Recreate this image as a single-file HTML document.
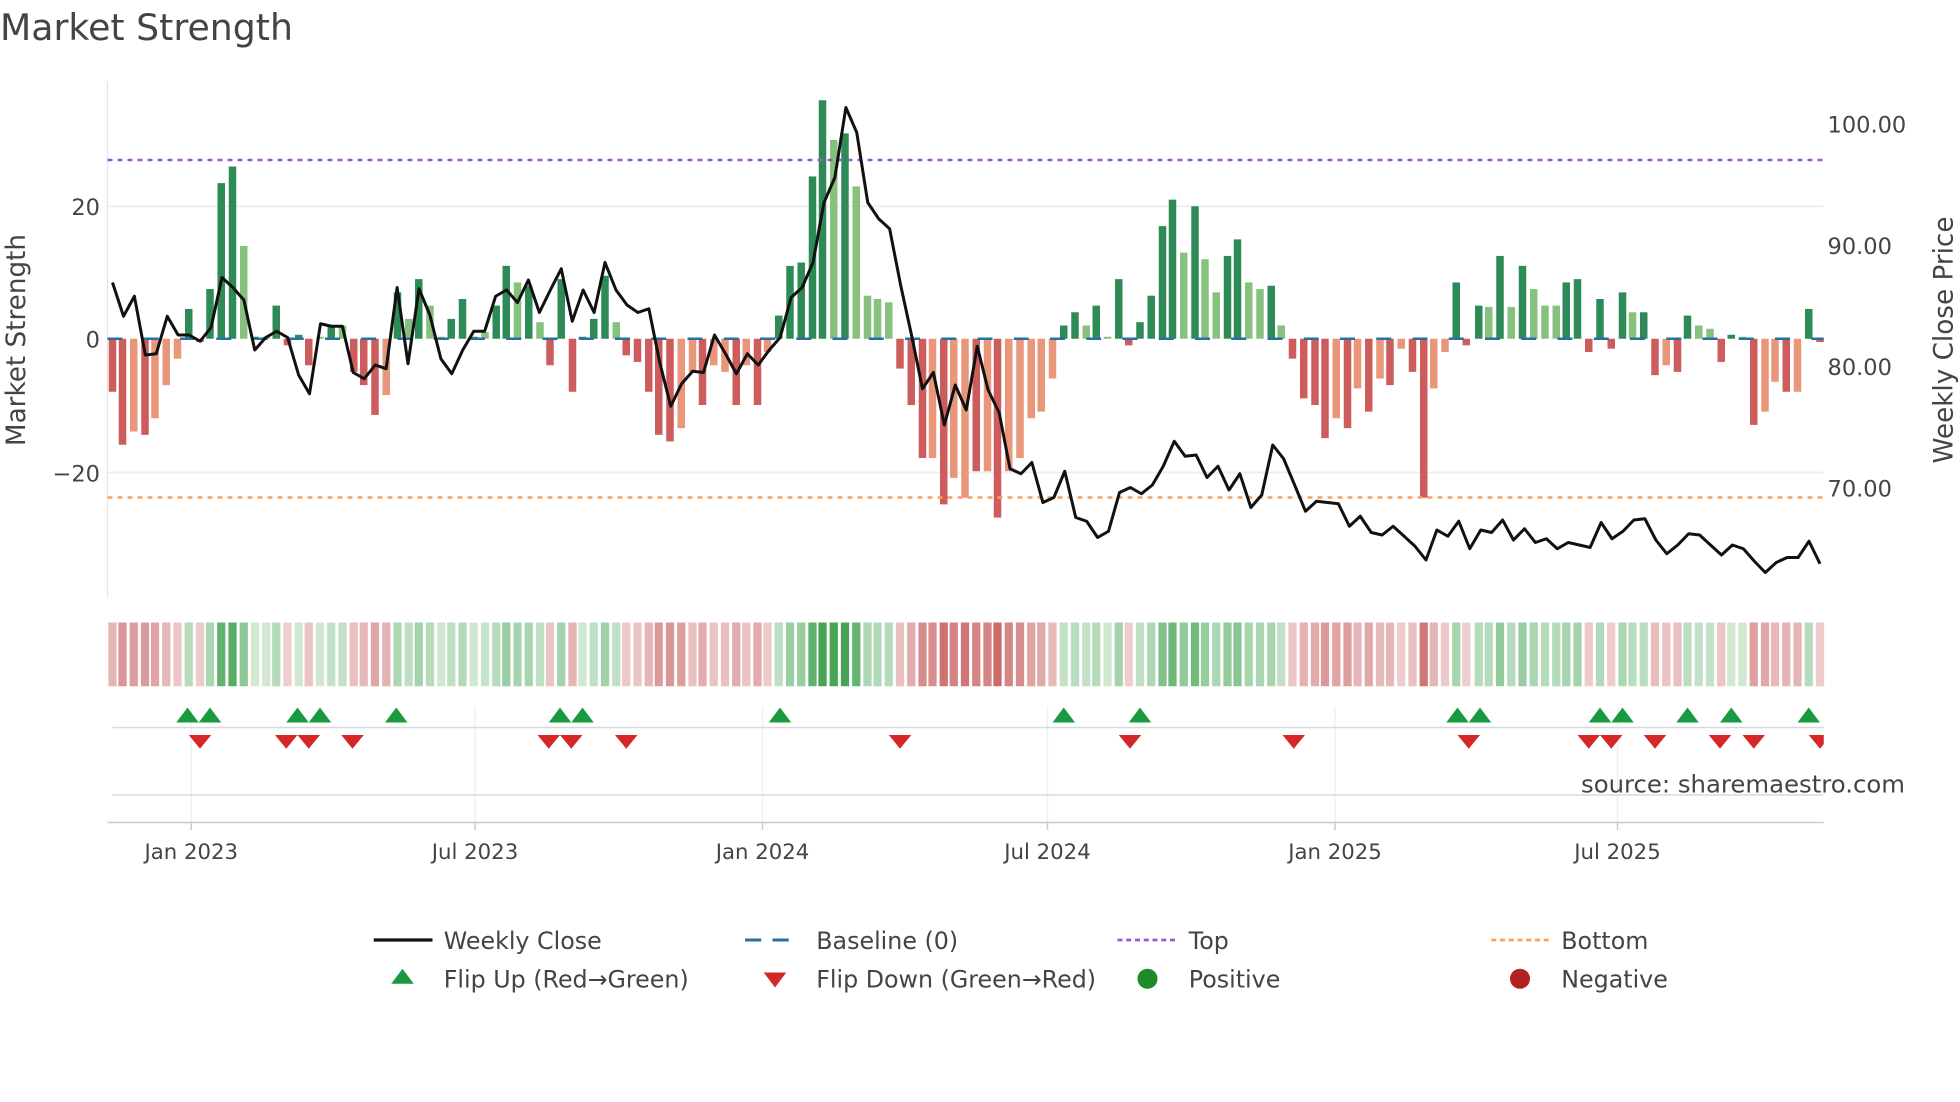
<!DOCTYPE html>
<html><head><meta charset="utf-8"><style>
html,body{margin:0;padding:0;background:#fff;width:1960px;height:1102px;overflow:hidden}
svg{display:block}
text{font-family:"DejaVu Sans","Liberation Sans",sans-serif;fill:#444}
</style></head><body>
<svg id="s" width="1960" height="1102" viewBox="0 0 1960 1102" xmlns="http://www.w3.org/2000/svg">
<defs><clipPath id="cp"><rect x="0" y="0" width="1459" height="900"/></clipPath></defs>
<g id="g" transform="scale(1.25)">
<text x="0" y="32" font-size="29" fill="#333">Market Strength</text>
<line x1="86" y1="165" x2="1459" y2="165" stroke="#eceef3" stroke-width="1.5"/>
<line x1="86" y1="378" x2="1459" y2="378" stroke="#eceef3" stroke-width="1.5"/>
<line x1="86" y1="65" x2="86" y2="478" stroke="#e2e4e8" stroke-width="1"/>
<text x="80" y="172" font-size="18" text-anchor="end">20</text>
<text x="80" y="278" font-size="18" text-anchor="end">0</text>
<text x="80" y="385" font-size="18" text-anchor="end">−20</text>
<text x="1462" y="106" font-size="18">100.00</text>
<text x="1462" y="203" font-size="18">90.00</text>
<text x="1462" y="300" font-size="18">80.00</text>
<text x="1462" y="397" font-size="18">70.00</text>
<text transform="translate(20,272) rotate(-90)" font-size="21" text-anchor="middle">Market Strength</text>
<text transform="translate(1562,272) rotate(-90)" font-size="21" text-anchor="middle">Weekly Close Price</text>
<g id="bars"></g>
<line x1="86" y1="271" x2="1459" y2="271" stroke="#2a6f9e" stroke-width="2" stroke-dasharray="12,17"/>
<line x1="86" y1="128" x2="1459" y2="128" stroke="#9b59d6" stroke-width="2" stroke-dasharray="4,4"/>
<line x1="86" y1="398" x2="1459" y2="398" stroke="#f4a45f" stroke-width="2" stroke-dasharray="4,4"/>
<polyline id="price" fill="none" stroke="#111" stroke-width="2.4" stroke-linejoin="round"/>
<g id="strip"></g>
<g stroke="#eef0f3" stroke-width="1.2">
<line x1="153" y1="565" x2="153" y2="658"/><line x1="380" y1="565" x2="380" y2="658"/>
<line x1="610" y1="565" x2="610" y2="658"/><line x1="838" y1="565" x2="838" y2="658"/>
<line x1="1068" y1="565" x2="1068" y2="658"/><line x1="1294" y1="565" x2="1294" y2="658"/>
</g>
<line x1="90" y1="582" x2="1459" y2="582" stroke="#d8dade" stroke-width="1.2"/>
<line x1="90" y1="636" x2="1459" y2="636" stroke="#d8dade" stroke-width="1.2"/>
<line x1="86" y1="658" x2="1459" y2="658" stroke="#c8cacf" stroke-width="1.2"/>
<g id="marks" clip-path="url(#cp)"></g>
<text x="1524" y="634" font-size="19.5" text-anchor="end" fill="#9a9a9a">source: sharemaestro.com</text>
<g stroke="#c8cacf" stroke-width="1.2">
<line x1="153" y1="658" x2="153" y2="664"/><line x1="380" y1="658" x2="380" y2="664"/>
<line x1="610" y1="658" x2="610" y2="664"/><line x1="838" y1="658" x2="838" y2="664"/>
<line x1="1068" y1="658" x2="1068" y2="664"/><line x1="1294" y1="658" x2="1294" y2="664"/>
</g>
<g font-size="17" text-anchor="middle">
<text x="153" y="687">Jan 2023</text><text x="380" y="687">Jul 2023</text>
<text x="610" y="687">Jan 2024</text><text x="838" y="687">Jul 2024</text>
<text x="1068" y="687">Jan 2025</text><text x="1294" y="687">Jul 2025</text>
</g>
<line x1="299" y1="752" x2="346" y2="752" stroke="#111" stroke-width="2.6"/>
<line x1="596" y1="752" x2="640" y2="752" stroke="#2a6f9e" stroke-width="2.4" stroke-dasharray="13,9"/>
<line x1="894" y1="752" x2="940" y2="752" stroke="#9b59d6" stroke-width="2.2" stroke-dasharray="4,3"/>
<line x1="1193" y1="752" x2="1239" y2="752" stroke="#f4a45f" stroke-width="2.2" stroke-dasharray="4,3"/>
<polygon points="313,787 331,787 322,775" fill="#1a9a3f"/>
<polygon points="611,778 629,778 620,790" fill="#d62728"/>
<circle cx="918" cy="783" r="8" fill="#1f8a2a"/>
<circle cx="1216" cy="783" r="8" fill="#b22222"/>
<g font-size="19" fill="#333">
<text x="355" y="759">Weekly Close</text><text x="653" y="759">Baseline (0)</text>
<text x="951" y="759">Top</text><text x="1249" y="759">Bottom</text>
<text x="355" y="790">Flip Up (Red→Green)</text><text x="653" y="790">Flip Down (Green→Red)</text>
<text x="951" y="790">Positive</text><text x="1249" y="790">Negative</text>
</g>
</g>
</svg>
<script>
var B=[[90,-8,'R'],[98,-16,'R'],[107,-14,'O'],[116,-14.5,'R'],[124,-12,'O'],[133,-7,'O'],[142,-3,'O'],[151,4.5,'D'],[160,-0.5,'R'],[168,7.5,'D'],[177,23.5,'D'],[186,26,'D'],[195,14,'L'],[204,0.3,'D'],[213,0.3,'L'],[221,5,'D'],[230,-1,'R'],[239,0.6,'D'],[247,-4,'R'],[256,0.3,'L'],[265,2,'D'],[274,2,'L'],[283,-5,'R'],[291,-7,'R'],[300,-11.5,'R'],[309,-8.5,'O'],[318,7,'D'],[327,3,'L'],[335,9,'D'],[344,5,'L'],[353,0.3,'L'],[361,3,'D'],[370,6,'D'],[379,0.3,'D'],[388,1,'L'],[397,5,'D'],[405,11,'D'],[414,8.5,'L'],[423,8,'D'],[432,2.5,'L'],[440,-4,'R'],[449,9,'D'],[458,-8,'R'],[466,0.3,'D'],[475,3,'D'],[484,9.5,'D'],[493,2.5,'L'],[501,-2.5,'R'],[510,-3.5,'R'],[519,-8,'R'],[527,-14.5,'R'],[536,-15.5,'R'],[545,-13.5,'O'],[554,-5,'O'],[562,-10,'R'],[571,-4,'O'],[580,-5,'O'],[589,-10,'R'],[597,-4,'O'],[606,-10,'R'],[614,-2,'O'],[623,3.5,'D'],[632,11,'D'],[641,11.5,'D'],[650,24.5,'D'],[658,36,'D'],[667,30,'L'],[676,31,'D'],[685,23,'L'],[694,6.5,'L'],[702,6,'L'],[711,5.5,'L'],[720,-4.5,'R'],[729,-10,'R'],[738,-18,'R'],[746,-18,'O'],[755,-25,'R'],[763,-21,'O'],[772,-24,'O'],[781,-20,'R'],[790,-20,'O'],[798,-27,'R'],[807,-20,'O'],[816,-18,'O'],[825,-12,'O'],[833,-11,'O'],[842,-6,'O'],[851,2,'D'],[860,4,'D'],[869,2,'L'],[877,5,'D'],[886,0.3,'L'],[895,9,'D'],[903,-1,'R'],[912,2.5,'D'],[921,6.5,'D'],[930,17,'D'],[938,21,'D'],[947,13,'L'],[956,20,'D'],[964,12,'L'],[973,7,'L'],[982,12.5,'D'],[990,15,'D'],[999,8.5,'L'],[1008,7.5,'L'],[1017,8,'D'],[1025,2,'L'],[1034,-3,'R'],[1043,-9,'R'],[1052,-10,'R'],[1060,-15,'R'],[1069,-12,'O'],[1078,-13.5,'R'],[1086,-7.5,'O'],[1095,-11,'R'],[1104,-6,'O'],[1112,-7,'R'],[1121,-1.5,'O'],[1130,-5,'R'],[1139,-24,'R'],[1147,-7.5,'O'],[1156,-2,'O'],[1165,8.5,'D'],[1173,-1,'R'],[1183,5,'D'],[1191,4.8,'L'],[1200,12.5,'D'],[1209,4.8,'L'],[1218,11,'D'],[1227,7.5,'L'],[1236,5,'L'],[1245,5,'L'],[1253,8.5,'D'],[1262,9,'D'],[1271,-2,'R'],[1280,6,'D'],[1289,-1.5,'R'],[1298,7,'D'],[1306,4,'L'],[1315,4,'D'],[1324,-5.5,'R'],[1333,-4,'O'],[1342,-5,'R'],[1350,3.5,'D'],[1359,2,'L'],[1368,1.5,'L'],[1377,-3.5,'R'],[1385,0.6,'D'],[1394,0.3,'L'],[1403,-13,'R'],[1412,-11,'O'],[1420,-6.5,'O'],[1429,-8,'R'],[1438,-8,'O'],[1447,4.5,'D'],[1456,-0.5,'R']];
var C={D:'#2e8b57',L:'#86c27e',R:'#cd5c5c',O:'#e9967a'};
var ns='http://www.w3.org/2000/svg';
function el(p,t,a){var e=document.createElementNS(ns,t);for(var k in a)e.setAttribute(k,a[k]);p.appendChild(e);return e;}
var bars=document.getElementById('bars'),strip=document.getElementById('strip');
B.forEach(function(b){var h=b[1]*5.3;el(bars,'rect',{x:b[0]-3,y:h>0?271-h:271,width:6,height:Math.max(Math.abs(h),1),fill:C[b[2]]});
var a=Math.min(1,0.28+Math.abs(b[1])/30*0.72);var col=b[1]>=0?'rgba(70,165,85,'+a+')':'rgba(200,95,95,'+a+')';
if(Math.abs(b[1])<1){col=b[1]>=0?'rgba(150,205,150,0.45)':'rgba(215,140,140,0.45)';}
el(strip,'rect',{x:b[0]-3.3,y:498,width:6.6,height:51,fill:col});});
var P=[226,253,237,284,283,253,268,268,273,262,222,230,240,280,270,265,270,300,315,259,261,261,298,303,292,295,230,291,231,252,287,299,280,265,265,237,232,242,224,250,232,215,257,232,250,210,232,244,250,247,290,325,307,297,298,268,283,299,283,292,280,270,238,230,210,162,142,86,106,162,175,183,228,268,311,298,340,308,328,277,312,330,375,379,370,402,398,377,414,417,430,425,394,390,395,388,373,353,365,364,382,373,392,379,406,396,356,367,388,409,401,402,403,421,413,426,428,421,429,437,448,424,429,417,439,424,426,416,432,423,434,431,439,434,436,438,418,431,425,416,415,432,443,436,427,428,436,444,436,439,449,458,450,446,446,433,451];
var pts=P.map(function(y,i){return (90+i*(1366/(P.length-1))).toFixed(1)+','+y;}).join(' ');
document.getElementById('price').setAttribute('points',pts);
var m=document.getElementById('marks');
[150,168,238,256,317,448,466,624,851,912,1166,1184,1280,1298,1350,1385,1447].forEach(function(x){el(m,'polygon',{points:(x-9)+',578 '+(x+9)+',578 '+x+',566',fill:'#1a9a3f'});});
[160,229,247,282,439,457,501,720,904,1035,1175,1271,1289,1324,1376,1403,1456].forEach(function(x){el(m,'polygon',{points:(x-9)+',588 '+(x+9)+',588 '+x+',599',fill:'#d62728'});});
</script>
</body></html>
